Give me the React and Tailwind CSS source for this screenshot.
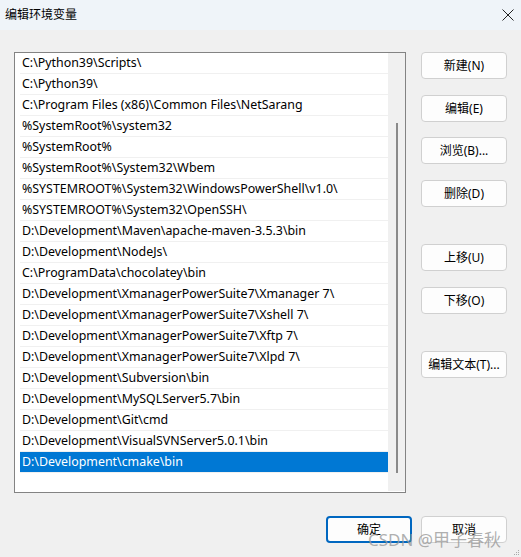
import React from 'react';

const paths = [
  'C:\\Python39\\Scripts\\',
  'C:\\Python39\\',
  'C:\\Program Files (x86)\\Common Files\\NetSarang',
  '%SystemRoot%\\system32',
  '%SystemRoot%',
  '%SystemRoot%\\System32\\Wbem',
  '%SYSTEMROOT%\\System32\\WindowsPowerShell\\v1.0\\',
  '%SYSTEMROOT%\\System32\\OpenSSH\\',
  'D:\\Development\\Maven\\apache-maven-3.5.3\\bin',
  'D:\\Development\\NodeJs\\',
  'C:\\ProgramData\\chocolatey\\bin',
  'D:\\Development\\XmanagerPowerSuite7\\Xmanager 7\\',
  'D:\\Development\\XmanagerPowerSuite7\\Xshell 7\\',
  'D:\\Development\\XmanagerPowerSuite7\\Xftp 7\\',
  'D:\\Development\\XmanagerPowerSuite7\\Xlpd 7\\',
  'D:\\Development\\Subversion\\bin',
  'D:\\Development\\MySQLServer5.7\\bin',
  'D:\\Development\\Git\\cmd',
  'D:\\Development\\VisualSVNServer5.0.1\\bin',
  'D:\\Development\\cmake\\bin',
];

const font = { fontFamily: '"Noto Sans", "Noto Sans CJK SC", sans-serif' };

const Btn = ({ children, primary }) => (
  <div
    className={`h-[27px] w-[86px] flex items-center justify-center rounded-[4px] bg-[#fdfdfd] text-[12px] text-black ${
      primary ? 'border-2 border-[#0067c0]' : 'border border-[#d0d0d0]'
    }`}
  >
    {children}
  </div>
);

export default function App() {
  const selected = paths.length - 1;
  return (
    <div className="w-[521px] h-[557px] bg-[#f0f0f0] flex flex-col relative overflow-hidden" style={font}>
      {/* title bar */}
      <div className="h-[30px] bg-[#eff4f9] flex items-center justify-between pl-[5px] pr-[7px]">
        <span className="text-[12px] text-black">编辑环境变量</span>
        <svg width="12" height="12" viewBox="0 0 12 12">
          <path d="M0.5 0.5 L11.5 11.5 M11.5 0.5 L0.5 11.5" stroke="#222" strokeWidth="1" />
        </svg>
      </div>

      <div className="flex pl-[14px] pt-[22px] gap-[15px]">
        {/* list box */}
        <div className="w-[392px] h-[441px] border border-[#838383] bg-white flex">
          <div className="flex-1 pl-[5px]">
            {paths.map((p, i) => (
              <div
                key={i}
                className={`h-[21px] border-b border-[#f0f0f0] flex items-center pl-[2px] pt-[1px] text-[12.4px] whitespace-nowrap overflow-hidden ${
                  i === selected ? 'bg-[#0078d4] text-white' : 'text-black'
                }`}
              >
                {p}
              </div>
            ))}
          </div>
          <div className="w-[17px] bg-[#f0f0f0] flex justify-center pt-[70px] mb-[1px]">
            <div className="w-[2px] h-[350px] bg-[#8a8a8a]" />
          </div>
        </div>

        {/* side buttons */}
        <div className="flex flex-col">
          <Btn>新建(N)</Btn>
          <div className="mt-[16px]"><Btn>编辑(E)</Btn></div>
          <div className="mt-[15px]"><Btn>浏览(B)...</Btn></div>
          <div className="mt-[16px]"><Btn>删除(D)</Btn></div>
          <div className="mt-[37px]"><Btn>上移(U)</Btn></div>
          <div className="mt-[16px]"><Btn>下移(O)</Btn></div>
          <div className="mt-[37px]"><Btn>编辑文本(T)...</Btn></div>
        </div>
      </div>

      {/* bottom buttons */}
      <div className="flex justify-end gap-[9px] pr-[14px] mt-[23px]">
        <Btn primary>确定</Btn>
        <Btn>取消</Btn>
      </div>

      {/* watermark */}
      <div className="absolute left-[368px] top-[527px] text-[17px] text-[#9a9a9a]/80 whitespace-nowrap">
        CSDN @甲子春秋
      </div>

      {/* resize grip */}
      <div className="absolute right-[2px] bottom-[2px] grid grid-cols-3 gap-[1px]">
        <span className="w-[1px] h-[1px]" />
        <span className="w-[1px] h-[1px]" />
        <span className="w-[1px] h-[1px] bg-[#aaa]" />
        <span className="w-[1px] h-[1px]" />
        <span className="w-[1px] h-[1px] bg-[#aaa]" />
        <span className="w-[1px] h-[1px] bg-[#aaa]" />
        <span className="w-[1px] h-[1px] bg-[#aaa]" />
        <span className="w-[1px] h-[1px] bg-[#aaa]" />
        <span className="w-[1px] h-[1px] bg-[#aaa]" />
      </div>
    </div>
  );
}
